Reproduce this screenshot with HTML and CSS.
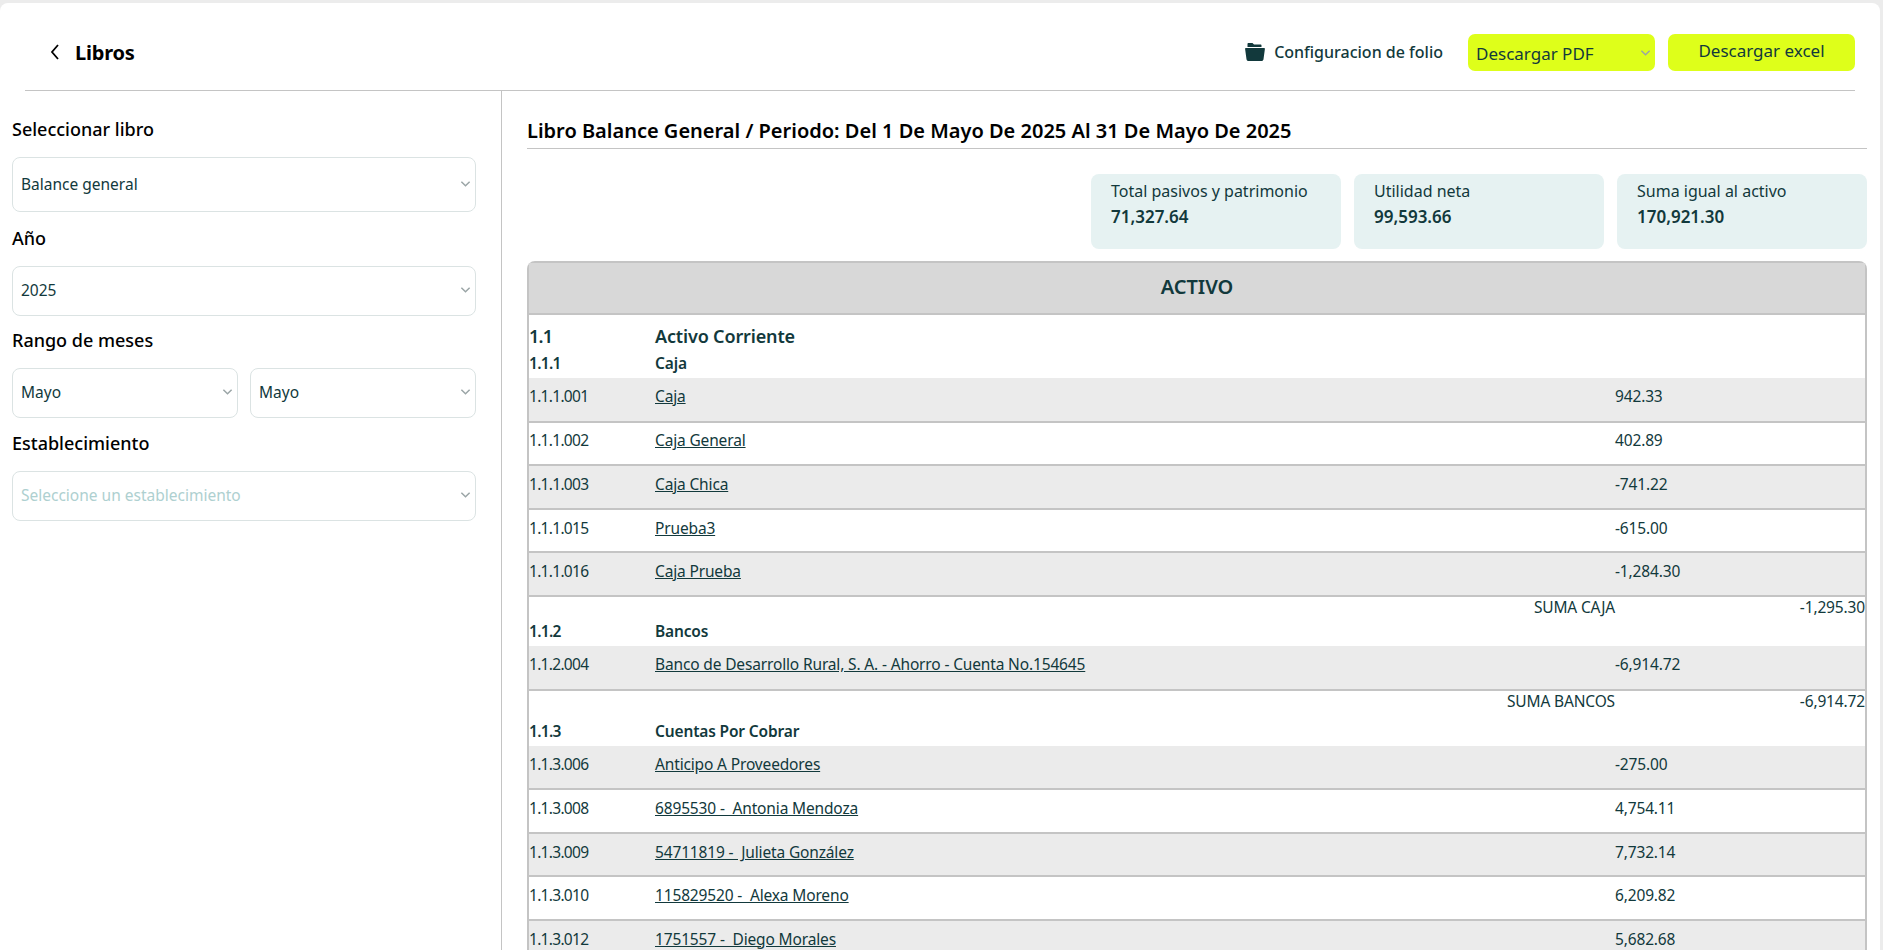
FILE: index.html
```html
<!DOCTYPE html>
<html lang="es">
<head>
    <meta charset="UTF-8">
    <title>Libros</title>
    <link rel="stylesheet" href="styles.css">
</head>
<body>

<div class="page">
    <!-- Top bar -->
    <header class="topbar">
        <div class="topbar-title">
            <svg class="back-icon" viewBox="0 0 12 18"><path d="M9 2 3 9l6 7" /></svg>
            <span>Libros</span>
        </div>
        <div class="topbar-actions">
            <a class="folio-link">
                <svg class="folder-icon" viewBox="0 0 20 20"><path d="M3.500 1h4l1.500 1.500h6.500c.6 0 1 .4 1 1V5h-14V2c0-.6.4-1 1-1zM1 6h18c.6 0 1 .5.9 1.100l-1.400 10.100c-.2 1-1 1.800-2 1.800H3.500c-1 0-1.800-.8-2-1.800L.1 7.100C0 6.500.4 6 1 6z" /></svg>
                Configuracion de folio
            </a>
            <div class="btn btn-select">
                <span>Descargar PDF</span>
                <svg class="chevron" viewBox="0 0 12 8"><path d="M1.500 1.500 6 6l4.500-4.500" /></svg>
            </div>
            <div class="btn btn-plain">Descargar excel</div>
        </div>
    </header>

    <div class="layout">
        <!-- Filters -->
        <aside class="sidebar">
            <label class="field-label">Seleccionar libro</label>
            <div class="select select-tall">
                <span>Balance general</span>
                <svg class="chevron" viewBox="0 0 12 8"><path d="M1.500 1.500 6 6l4.500-4.500" /></svg>
            </div>
            <label class="field-label">Año</label>
            <div class="select">
                <span>2025</span>
                <svg class="chevron" viewBox="0 0 12 8"><path d="M1.500 1.500 6 6l4.500-4.500" /></svg>
            </div>
            <label class="field-label">Rango de meses</label>
            <div class="select-pair">
                <div class="select">
                    <span>Mayo</span>
                    <svg class="chevron" viewBox="0 0 12 8"><path d="M1.500 1.500 6 6l4.500-4.500" /></svg>
                </div>
                <div class="select">
                    <span>Mayo</span>
                    <svg class="chevron" viewBox="0 0 12 8"><path d="M1.500 1.500 6 6l4.500-4.500" /></svg>
                </div>
            </div>
            <label class="field-label">Establecimiento</label>
            <div class="select placeholder">
                <span>Seleccione un establecimiento</span>
                <svg class="chevron" viewBox="0 0 12 8"><path d="M1.500 1.500 6 6l4.500-4.500" /></svg>
            </div>
        </aside>

        <!-- Report -->
        <main class="report">
            <h1 class="report-title">Libro Balance General / Periodo: Del 1 De Mayo De 2025 Al 31 De Mayo De 2025</h1>

            <div class="totals">
                <div class="total-card">
                    <span class="total-label">Total pasivos y patrimonio</span>
                    <strong class="total-value">71,327.64</strong>
                </div>
                <div class="total-card">
                    <span class="total-label">Utilidad neta</span>
                    <strong class="total-value">99,593.66</strong>
                </div>
                <div class="total-card">
                    <span class="total-label">Suma igual al activo</span>
                    <strong class="total-value">170,921.30</strong>
                </div>
            </div>

            <div class="ledger">
                <div class="ledger-head">ACTIVO</div>
                <table class="ledger-table">
                    <colgroup>
                        <col class="col-code">
                        <col>
                        <col class="col-amount">
                        <col class="col-total">
                    </colgroup>
                    <tr class="group-row"><td class="code">1.1</td><td colspan="3">Activo Corriente</td></tr>
                    <tr class="sub-row"><td class="code">1.1.1</td><td colspan="3">Caja</td></tr>
                    <tr class="item-row shaded"><td class="code">1.1.1.001</td><td><a>Caja</a></td><td>942.33</td><td></td></tr>
                    <tr class="item-row"><td class="code">1.1.1.002</td><td><a>Caja General</a></td><td>402.89</td><td></td></tr>
                    <tr class="item-row shaded"><td class="code">1.1.1.003</td><td><a>Caja Chica</a></td><td>-741.22</td><td></td></tr>
                    <tr class="item-row"><td class="code">1.1.1.015</td><td><a>Prueba3</a></td><td>-615.00</td><td></td></tr>
                    <tr class="item-row shaded"><td class="code">1.1.1.016</td><td><a>Caja Prueba</a></td><td>-1,284.30</td><td></td></tr>
                    <tr class="sum-row"><td colspan="2">SUMA CAJA</td><td></td><td>-1,295.30</td></tr>
                    <tr class="sub-row"><td class="code">1.1.2</td><td colspan="3">Bancos</td></tr>
                    <tr class="item-row shaded"><td class="code">1.1.2.004</td><td><a>Banco de Desarrollo Rural, S. A. - Ahorro - Cuenta No.154645</a></td><td>-6,914.72</td><td></td></tr>
                    <tr class="sum-row sum-row-wide"><td colspan="2">SUMA BANCOS</td><td></td><td>-6,914.72</td></tr>
                    <tr class="sub-row"><td class="code">1.1.3</td><td colspan="3">Cuentas Por Cobrar</td></tr>
                    <tr class="item-row shaded"><td class="code">1.1.3.006</td><td><a>Anticipo A Proveedores</a></td><td>-275.00</td><td></td></tr>
                    <tr class="item-row"><td class="code">1.1.3.008</td><td><a>6895530 -&nbsp; Antonia Mendoza</a></td><td>4,754.11</td><td></td></tr>
                    <tr class="item-row shaded"><td class="code">1.1.3.009</td><td><a>54711819 -&nbsp; Julieta González</a></td><td>7,732.14</td><td></td></tr>
                    <tr class="item-row"><td class="code">1.1.3.010</td><td><a>115829520 -&nbsp; Alexa Moreno</a></td><td>6,209.82</td><td></td></tr>
                    <tr class="item-row shaded"><td class="code">1.1.3.012</td><td><a>1751557 -&nbsp; Diego Morales</a></td><td>5,682.68</td><td></td></tr>
                </table>
            </div>
        </main>
    </div>
</div>

</body>
</html>
```

FILE: styles.css
```css
/* Basic styling */
body {
    margin: 0;
    padding-top: 3px;
    box-sizing: border-box;
    height: 100vh;
    overflow: hidden;
    background: #ececec;
    color: #12393c;
    font-family: "Noto Sans", Arial, sans-serif;
    font-size: 16px;
}
.page {
    height: 100%;
    margin-right: 3px;
    background: #fff;
    border-radius: 8px 8px 0 0;
    overflow: hidden;
    display: flex;
    flex-direction: column;
}

/* Top bar */
.topbar {
    display: flex;
    align-items: center;
    justify-content: space-between;
    height: 88px;
    flex-shrink: 0;
    box-sizing: border-box;
    margin: 0 25px;
    padding-top: 11px;
    border-bottom: 1px solid #c4c4c4;
}
.topbar-title {
    display: flex;
    align-items: center;
    gap: 14px;
    padding-left: 24px;
    color: #000;
    font-size: 20px;
    font-weight: 700;
    letter-spacing: -0.2px;
}
.back-icon {
    width: 12px;
    height: 18px;
    fill: none;
    stroke: #000;
    stroke-width: 1.8;
}
.topbar-actions {
    display: flex;
    align-items: center;
    gap: 13px;
}
.folio-link {
    display: flex;
    align-items: center;
    gap: 9px;
    margin-right: 12px;
    font-weight: 500;
}
.folder-icon {
    width: 20px;
    height: 20px;
    fill: #12393c;
}
.btn {
    box-sizing: border-box;
    width: 187px;
    height: 37px;
    border-radius: 7px;
    background: #deff1a;
    font-size: 17px;
    display: flex;
    align-items: center;
}
.btn-select {
    justify-content: space-between;
    padding: 2px 4px 0 8px;
}
.btn-plain {
    justify-content: center;
    padding-bottom: 3px;
}
.chevron {
    width: 11px;
    height: 8px;
    fill: none;
    stroke: #9aa5a6;
    stroke-width: 1.6;
    flex-shrink: 0;
}

/* Layout */
.layout {
    flex: 1;
    display: flex;
    min-height: 0;
}
.sidebar {
    box-sizing: border-box;
    width: 502px;
    flex-shrink: 0;
    padding: 25px 25px 0 12px;
    border-right: 1px solid #c4c4c4;
}
.field-label {
    display: block;
    height: 26px;
    line-height: 26px;
    margin-bottom: 15px;
    color: #000;
    font-size: 18px;
    font-weight: 500;
}
.select {
    box-sizing: border-box;
    height: 50px;
    margin-bottom: 11px;
    padding: 0 4px 2px 8px;
    border: 1px solid #dbe3e3;
    border-radius: 8px;
    font-size: 15.5px;
    display: flex;
    align-items: center;
    justify-content: space-between;
}
.select-tall {
    height: 55px;
    margin-bottom: 13px;
}
.select-pair {
    display: grid;
    grid-template-columns: 1fr 1fr;
    gap: 12px;
    margin-bottom: 1px;
}
.placeholder {
    color: #aed0d0;
}

/* Report */
.report {
    flex: 1;
    min-width: 0;
    padding: 0 13px 0 25px;
}
.report-title {
    height: 57px;
    line-height: 80px;
    margin: 0;
    border-bottom: 1px solid #c4c4c4;
    color: #000;
    font-size: 20px;
    font-weight: 600;
    overflow: hidden;
    white-space: nowrap;
}
.totals {
    display: flex;
    justify-content: flex-end;
    gap: 13px;
    margin: 25px 0 12px;
}
.total-card {
    box-sizing: border-box;
    width: 250px;
    height: 75px;
    padding: 5px 20px;
    border-radius: 8px;
    background: #e6f2f2;
    display: flex;
    flex-direction: column;
}
.total-label {
    line-height: 24px;
}
.total-value {
    line-height: 28px;
    font-size: 17px;
    font-weight: 600;
}

/* Ledger table */
.ledger {
    border: 2px solid #c4c4c4;
    border-bottom: 0;
    border-radius: 8px 8px 0 0;
}
.ledger-head {
    height: 50px;
    line-height: 48px;
    background: #d8d8d8;
    border-bottom: 2px solid #c4c4c4;
    text-align: center;
    font-size: 20px;
    font-weight: 600;
}
.ledger-table {
    width: 100%;
    border-collapse: collapse;
    table-layout: fixed;
    font-size: 15.5px;
    letter-spacing: -0.15px;
}
.ledger-table td {
    padding: 0;
    white-space: nowrap;
}
.ledger-table td.code {
    letter-spacing: -0.7px;
}
.col-code {
    width: 126px;
}
.col-amount {
    width: 150px;
}
.col-total {
    width: 100px;
}
.group-row td {
    height: 37px;
    padding-top: 4px;
    box-sizing: border-box;
    font-size: 18px;
    font-weight: 600;
}
.sub-row td {
    height: 24px;
    box-sizing: border-box;
    padding-bottom: 4px;
    font-weight: 600;
}
.item-row td {
    height: 43.600px;
    box-sizing: border-box;
    padding-bottom: 6px;
    border-bottom: 2px solid #c4c4c4;
}
.shaded td {
    background: #ebebeb;
}
.item-row a {
    text-decoration: underline;
}
.sum-row td {
    height: 23px;
    line-height: 20px;
    vertical-align: top;
}
.sum-row-wide td {
    height: 29px;
}
.sum-row td:first-child,
.sum-row td:last-child {
    text-align: right;
}
```
